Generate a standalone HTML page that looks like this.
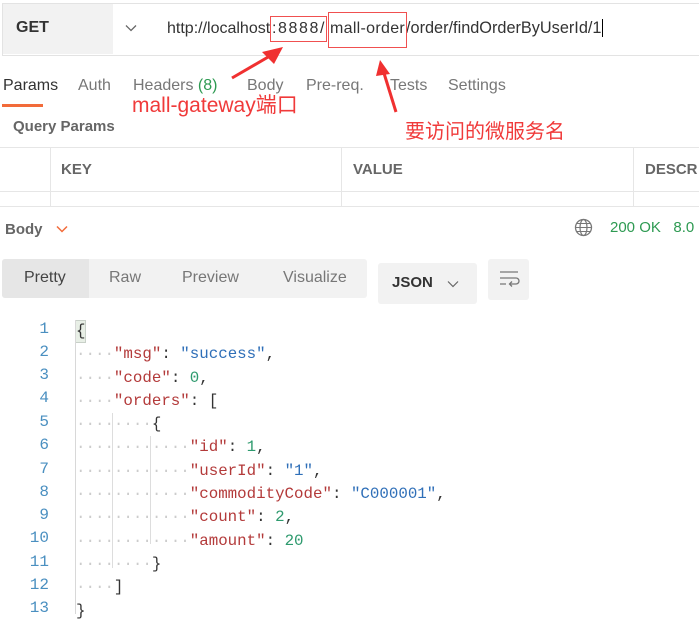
<!DOCTYPE html>
<html><head><meta charset="utf-8"><style>
body{margin:0;width:699px;height:614px;overflow:hidden;background:#fff;font-family:"Liberation Sans","Noto Sans CJK SC",sans-serif;position:relative;color:#333}
.a{position:absolute}
.code{font-family:"Liberation Mono",monospace;font-size:15.8px;white-space:pre;}
.ln{position:absolute;left:0;width:49px;text-align:right;color:#4a8fc0;font-family:"Liberation Mono",monospace;font-size:16px}
.k{color:#b33a3a}.s{color:#2f6fb8}.n{color:#2e9a6e}.d{color:#ccc}
.u{position:absolute;top:20px;font-size:16px;color:#333;white-space:nowrap}
</style></head><body>
<div class="a" style="left:2px;top:3px;width:700px;height:51px;border:1px solid #e3e3e3;background:#fff"></div>
<div class="a" style="left:3px;top:4px;width:110px;height:50px;background:#f2f2f2"></div>
<div class="a" style="left:16px;top:19px;font-size:16px;font-weight:bold;color:#333">GET</div>
<svg class="a" style="left:125px;top:24px" width="12" height="8"><path d="M1 1.5L6 6.5L11 1.5" fill="none" stroke="#666" stroke-width="1.3"/></svg>
<div class="u" style="left:167px">http://localhost</div>
<div class="u" style="left:272px;letter-spacing:1.6px">:8888/</div>
<div class="u" style="left:330px;letter-spacing:0.3px">mall-order</div>
<div class="u" style="left:406px;font-size:16.3px;top:19px">/order/findOrderByUserId/1<span style="border-left:1px solid #000;margin-left:1px"></span></div>
<div class="a" style="left:270px;top:16px;width:55px;height:24px;border:1px solid #f05050"></div>
<div class="a" style="left:328px;top:12px;width:77px;height:34px;border:1px solid #f05050"></div>
<div class="a" style="left:3px;top:77px;font-size:16px;color:#333">Params</div>
<div class="a" style="left:2px;top:104px;width:41px;height:3px;background:#f26b3a"></div>
<div class="a" style="left:78px;top:77px;font-size:16px;color:#777">Auth</div>
<div class="a" style="left:133px;top:77px;font-size:16px;color:#777">Headers <span style="color:#2e9a52">(8)</span></div>
<div class="a" style="left:247px;top:77px;font-size:16px;color:#777">Body</div>
<div class="a" style="left:306px;top:77px;font-size:16px;color:#777">Pre-req.</div>
<div class="a" style="left:390px;top:77px;font-size:16px;color:#777">Tests</div>
<div class="a" style="left:448px;top:77px;font-size:16px;color:#777">Settings</div>
<div class="a" style="left:132px;top:89px;font-size:21px;color:#f03a3a">mall-gateway端口</div>
<div class="a" style="left:405px;top:115px;font-size:20px;color:#f03a3a">要访问的微服务名</div>
<svg class="a" style="left:0;top:0" width="699" height="160"><path d="M232 78L275 53" stroke="#f03030" stroke-width="3"/><path d="M283 47L262 52L274 64Z" fill="#f03030"/><path d="M396 112L383 70" stroke="#f03030" stroke-width="3"/><path d="M380 60L376 76L390 74Z" fill="#f03030"/></svg>
<div class="a" style="left:13px;top:118px;font-size:15px;font-weight:bold;color:#666">Query Params</div>
<div class="a" style="left:0;top:147px;width:699px;height:1px;background:#e6e6e6"></div>
<div class="a" style="left:0;top:191px;width:699px;height:1px;background:#e6e6e6"></div>
<div class="a" style="left:0;top:206px;width:699px;height:1px;background:#e6e6e6"></div>
<div class="a" style="left:50px;top:148px;width:1px;height:58px;background:#e6e6e6"></div>
<div class="a" style="left:341px;top:148px;width:1px;height:58px;background:#e6e6e6"></div>
<div class="a" style="left:633px;top:148px;width:1px;height:58px;background:#e6e6e6"></div>
<div class="a" style="left:61px;top:161px;font-size:15px;font-weight:bold;color:#666">KEY</div>
<div class="a" style="left:353px;top:161px;font-size:15px;font-weight:bold;color:#666">VALUE</div>
<div class="a" style="left:645px;top:161px;font-size:15px;font-weight:bold;color:#666">DESCR</div>
<div class="a" style="left:5px;top:221px;font-size:15px;font-weight:bold;color:#666">Body</div>
<svg class="a" style="left:56px;top:225px" width="12" height="8"><path d="M1 1.5L6 6.5L11 1.5" fill="none" stroke="#f26b3a" stroke-width="1.5"/></svg>
<svg class="a" style="left:574px;top:218px" width="19" height="19"><circle cx="9.5" cy="9.5" r="8" fill="none" stroke="#777" stroke-width="1.3"/><ellipse cx="9.5" cy="9.5" rx="3.5" ry="8" fill="none" stroke="#777" stroke-width="1.2"/><path d="M1.5 9.5H17.5M3 5.5H16M3 13.5H16" stroke="#777" stroke-width="1.1"/></svg>
<div class="a" style="left:610px;top:219px;font-size:15px;color:#2e9a52">200 OK &nbsp;&nbsp;8.0</div>
<div class="a" style="left:2px;top:259px;width:365px;height:39px;background:#f2f2f2;border-radius:3px"></div>
<div class="a" style="left:2px;top:259px;width:87px;height:39px;background:#e6e6e6;border-radius:3px 0 0 3px"></div>
<div class="a" style="left:24px;top:269px;font-size:16px;color:#444">Pretty</div>
<div class="a" style="left:109px;top:269px;font-size:16px;color:#777">Raw</div>
<div class="a" style="left:182px;top:269px;font-size:16px;color:#777">Preview</div>
<div class="a" style="left:283px;top:269px;font-size:16px;color:#777">Visualize</div>
<div class="a" style="left:378px;top:263px;width:99px;height:41px;background:#f2f2f2;border-radius:3px"></div>
<div class="a" style="left:392px;top:274px;font-size:15px;font-weight:bold;color:#333">JSON</div>
<svg class="a" style="left:447px;top:280px" width="12" height="8"><path d="M1 1.5L6 6.5L11 1.5" fill="none" stroke="#666" stroke-width="1.2"/></svg>
<div class="a" style="left:488px;top:259px;width:41px;height:41px;background:#f2f2f2;border-radius:3px"></div>
<svg class="a" style="left:498px;top:269px" width="22" height="20"><path d="M2 3H20M2 9H18a3 3 0 0 1 0 6H12M2 15H8" fill="none" stroke="#777" stroke-width="1.3"/><path d="M14 12.5L11.5 15L14 17.5" fill="none" stroke="#777" stroke-width="1.3"/></svg>
<div class="a" style="left:75px;top:320px;width:9px;height:21px;background:#e8efe6;border:1px solid #c8d0c8"></div>
<div class="a" style="left:75px;top:320px;width:1px;height:294px;background:#d8d8d8"></div>
<div class="a" style="left:112px;top:413px;width:1px;height:155px;background:#ddd"></div>
<div class="a" style="left:150px;top:436px;width:1px;height:108px;background:#ddd"></div>
<div class="a" style="left:0;top:320px;width:699px">
<div class="ln" style="top:0">1</div><div class="ln" style="top:23px">2</div><div class="ln" style="top:46px">3</div><div class="ln" style="top:69px">4</div><div class="ln" style="top:93px">5</div><div class="ln" style="top:116px">6</div><div class="ln" style="top:140px">7</div><div class="ln" style="top:163px">8</div><div class="ln" style="top:186px">9</div><div class="ln" style="top:209px">10</div><div class="ln" style="top:233px">11</div><div class="ln" style="top:256px">12</div><div class="ln" style="top:279px">13</div>
<div class="code a" style="left:76px;top:0;line-height:23.3px">{
<span class="d">····</span><span class="k">"msg"</span>: <span class="s">"success"</span>,
<span class="d">····</span><span class="k">"code"</span>: <span class="n">0</span>,
<span class="d">····</span><span class="k">"orders"</span>: [
<span class="d">········</span>{
<span class="d">············</span><span class="k">"id"</span>: <span class="n">1</span>,
<span class="d">············</span><span class="k">"userId"</span>: <span class="s">"1"</span>,
<span class="d">············</span><span class="k">"commodityCode"</span>: <span class="s">"C000001"</span>,
<span class="d">············</span><span class="k">"count"</span>: <span class="n">2</span>,
<span class="d">············</span><span class="k">"amount"</span>: <span class="n">20</span>
<span class="d">········</span>}
<span class="d">····</span>]
}</div></div>
</body></html>
